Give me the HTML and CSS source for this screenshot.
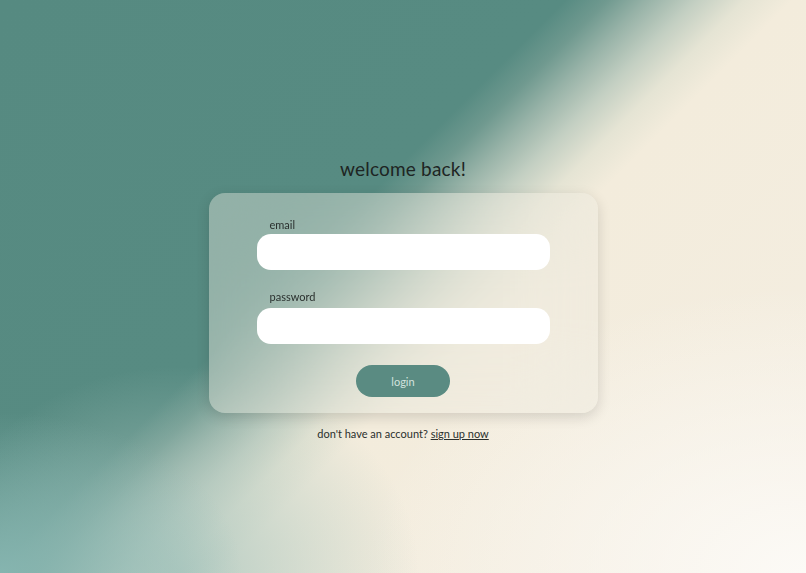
FILE: index.html
```html
<!DOCTYPE html>
<html lang="en">
<head>
    <meta charset="UTF-8">
    <meta name="viewport" content="width=device-width, initial-scale=1.0">
    <title>Login</title>
    <link rel="stylesheet" href="styles.css">
</head>
<body>
    <main class="login-page">
        <h1 class="login-title">welcome back!</h1>

        <!-- Login Card -->
        <form class="login-card">
            <div class="field">
                <label class="field-label" for="email">email</label>
                <input class="field-input" id="email" type="email">
            </div>
            <div class="field">
                <label class="field-label" for="password">password</label>
                <input class="field-input" id="password" type="password">
            </div>
            <div class="button-row">
                <button class="login-button" type="button">login</button>
            </div>
        </form>

        <p class="signup-text">don't have an account? <a class="signup-link" href="#">sign up now</a></p>
    </main>
</body>
</html>
```

FILE: styles.css
```css
:root {
    --teal: #568a81;
    --teal-light: #87b5b0;
    --cream: #f3ecdc;
    --cream-light: #fcfaf6;
    --text-primary: #1e2523;
    --button-text: #d3e3df;
}

* {
    margin: 0;
    padding: 0;
    box-sizing: border-box;
    font-family: 'Lato', 'Noto Sans', sans-serif;
}

html, body {
    height: 100%;
}

body {
    color: var(--text-primary);
    background:
        radial-gradient(ellipse 30% 28% at 0% 100%, rgba(135, 182, 177, 0.95), rgba(135, 182, 177, 0) 100%),
        radial-gradient(ellipse 30% 36% at 22% 100%, rgba(170, 198, 190, 0.85), rgba(170, 198, 190, 0) 100%),
        radial-gradient(ellipse 55% 50% at 100% 100%, var(--cream-light), rgba(252, 250, 246, 0) 100%),
        linear-gradient(135deg, var(--teal) 0%, #578b82 41%, #6f998f 44%, #98b3a8 47%, #c3cfc2 50.5%, #e5e4d4 54%, var(--cream) 57.5%, #f4eee2 100%);
    overflow: hidden;
}

.login-page {
    display: flex;
    flex-direction: column;
    align-items: center;
    padding-top: 157px;
}

.login-title {
    font-size: 19px;
    font-weight: 400;
    letter-spacing: 0.2px;
    line-height: 23px;
    margin-bottom: 13px;
}

.login-card {
    width: 389px;
    padding: 25px 48px 16px;
    border-radius: 16px;
    background: rgba(238, 234, 224, 0.4);
    backdrop-filter: blur(40px);
    -webkit-backdrop-filter: blur(40px);
    box-shadow: 0 4px 14px rgba(0, 0, 0, 0.14);
    display: flex;
    flex-direction: column;
}

.field {
    display: flex;
    flex-direction: column;
    margin-bottom: 20px;
}

.field + .field {
    margin-bottom: 21px;
}

.field-label {
    font-size: 11px;
    line-height: 14px;
    padding-left: 13px;
    margin-bottom: 2px;
    color: #2a302e;
}

.field + .field .field-label {
    margin-bottom: 4px;
}

.field-input {
    height: 36px;
    border: none;
    border-radius: 14px;
    background: #ffffff;
    padding: 0 14px;
    font-size: 12px;
    outline: none;
}

.button-row {
    display: flex;
    justify-content: center;
}

.login-button {
    width: 94px;
    height: 32px;
    border: none;
    border-radius: 16px;
    background: #5a8b82;
    color: var(--button-text);
    font-size: 11px;
    cursor: pointer;
}

.signup-text {
    margin-top: 14px;
    font-size: 11px;
    line-height: 14px;
    color: #2a2f2d;
}

.signup-link {
    color: #2a2f2d;
    text-decoration: underline;
}
```
